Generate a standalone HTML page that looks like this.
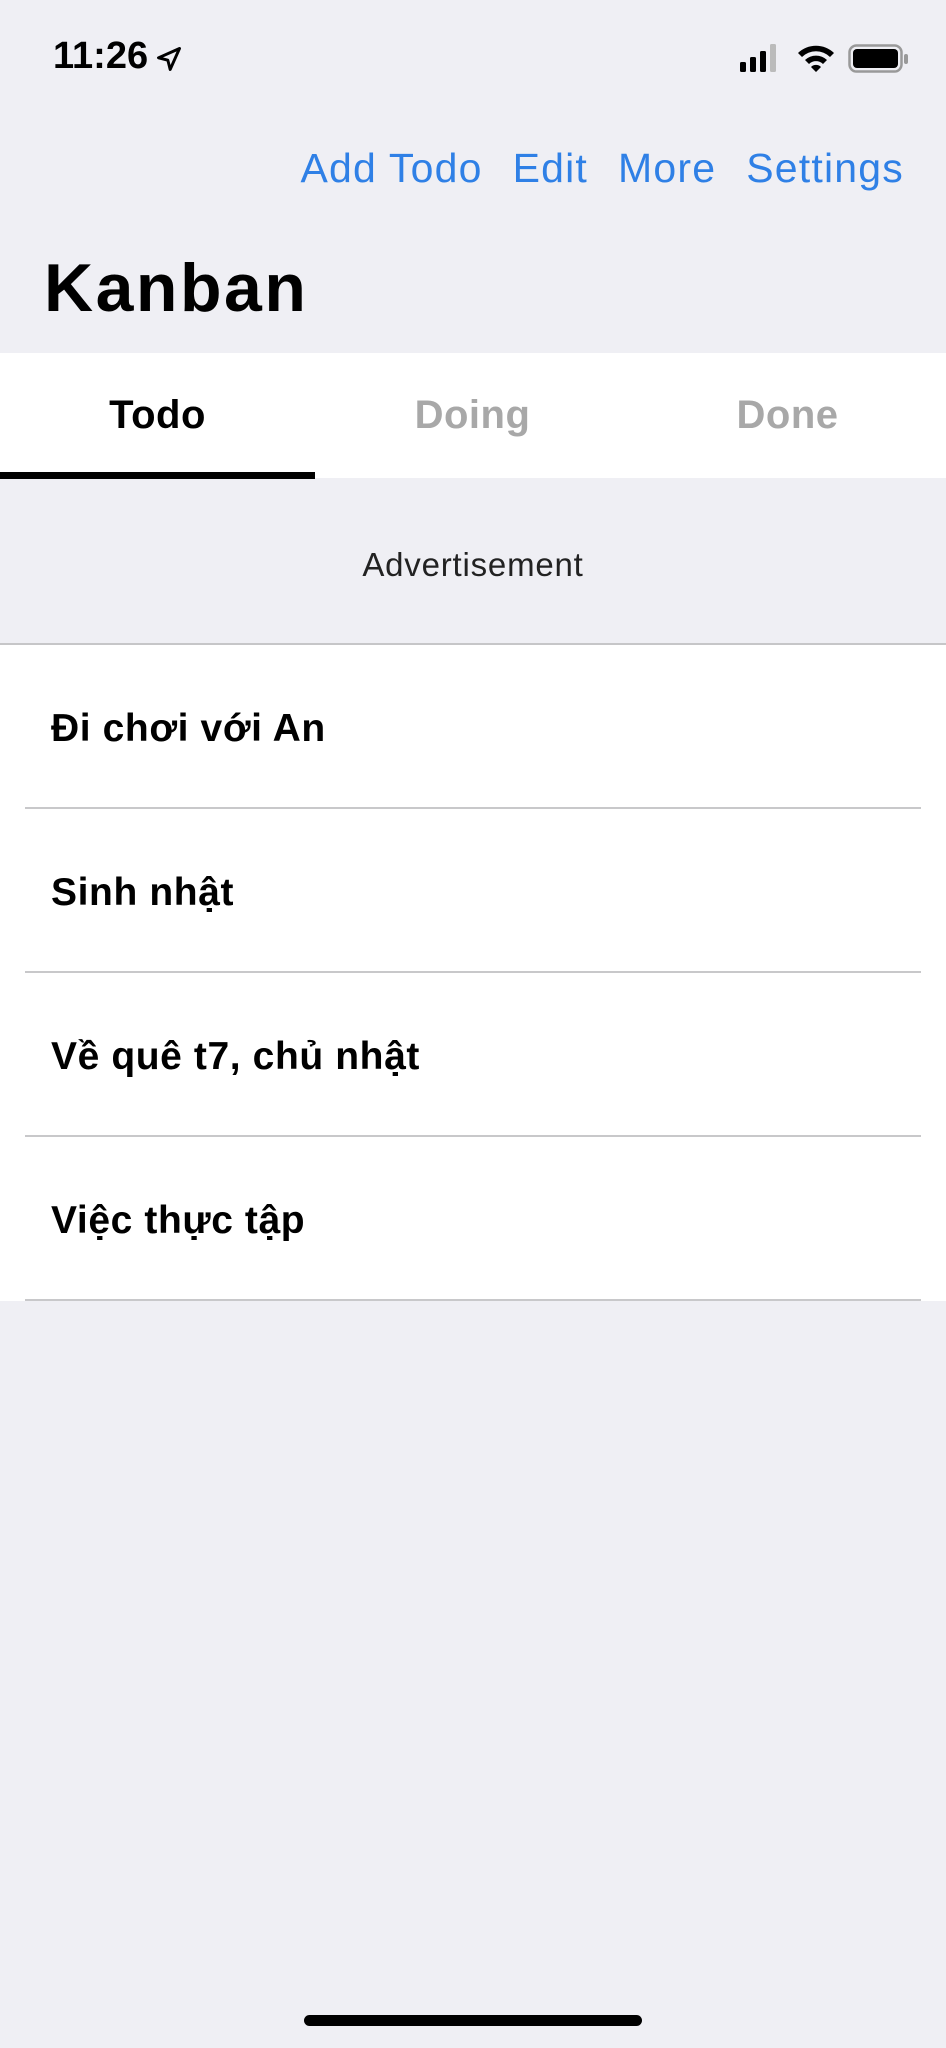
<!DOCTYPE html>
<html><head><meta charset="utf-8"><style>
*{margin:0;padding:0;box-sizing:border-box}
body{width:946px;height:2048px;background:#efeff4;font-family:"Liberation Sans","DejaVu Sans",sans-serif;position:relative;overflow:hidden;color:#000}
.abs{position:absolute}
.nav{top:145px;right:42px;font-size:41px;color:#2f80e6;display:flex;gap:30px;white-space:nowrap;letter-spacing:1.2px}
.title{left:44px;top:249px;font-size:68px;font-weight:bold;letter-spacing:2.5px}
.tabs{top:353px;left:0;width:946px;height:125px;background:#fff}
.tab{position:absolute;top:40px;width:315px;text-align:center;font-size:40px;font-weight:bold;letter-spacing:0.5px}
.ul{position:absolute;left:0;top:119px;width:315px;height:7px;background:#000}
.ad{top:546px;width:946px;text-align:center;font-size:33px;color:#222;letter-spacing:0.8px}
.list{top:643px;left:0;width:946px;height:658px;background:#fff;border-top:2px solid #c6c6c8}
.row{height:164px;margin-left:25px;margin-right:25px;border-bottom:2px solid #c8c8ca;font-size:39px;font-weight:bold;padding-left:26px;padding-top:4px;line-height:160px;letter-spacing:0.6px}
</style></head><body>
<div class="abs" style="left:53px;top:35px;font-size:38px;font-weight:bold">11:26</div>
<svg class="abs" style="left:155px;top:45px" width="28" height="28" viewBox="0 0 24 24"><path d="M21 3L3 11l8 2 2 8z" fill="none" stroke="#000" stroke-width="2.5" stroke-linejoin="round"/></svg>
<svg class="abs" style="left:740px;top:44px" width="44" height="30"><rect x="0" y="18" width="6" height="10" rx="1.5"/><rect x="10" y="13" width="6" height="15" rx="1.5"/><rect x="20" y="7" width="6" height="21" rx="1.5"/><rect x="30" y="0" width="6" height="28" rx="1.5" fill="#bbb"/></svg>
<svg class="abs" style="left:796px;top:42px" width="40" height="32" viewBox="0 0 40 32"><path d="M2 11a26 26 0 0 1 36 0l-4 4a20 20 0 0 0-28 0z M9 18a16 16 0 0 1 22 0l-4 4a10 10 0 0 0-14 0z M15 25a7 7 0 0 1 10 0l-5 5z"/></svg>
<svg class="abs" style="left:848px;top:44px" width="62" height="30"><rect x="1.5" y="1.5" width="52" height="26" rx="7" fill="none" stroke="#999" stroke-width="2.5"/><rect x="5" y="5" width="45" height="19" rx="4"/><rect x="56" y="10" width="4" height="10" rx="2" fill="#999"/></svg>
<div class="abs nav"><span>Add Todo</span><span>Edit</span><span>More</span><span>Settings</span></div>
<div class="abs title">Kanban</div>
<div class="abs tabs">
<div class="tab" style="left:0">Todo</div>
<div class="tab" style="left:315px;color:#a8a8a8">Doing</div>
<div class="tab" style="left:630px;color:#a8a8a8">Done</div>
<div class="ul"></div>
</div>
<div class="abs ad">Advertisement</div>
<div class="abs list">
<div class="row">Đi chơi với An</div>
<div class="row">Sinh nhật</div>
<div class="row">Về quê t7, chủ nhật</div>
<div class="row">Việc thực tập</div>
</div>
<div class="abs" style="left:304px;top:2015px;width:338px;height:11px;border-radius:6px;background:#000"></div>
</body></html>
